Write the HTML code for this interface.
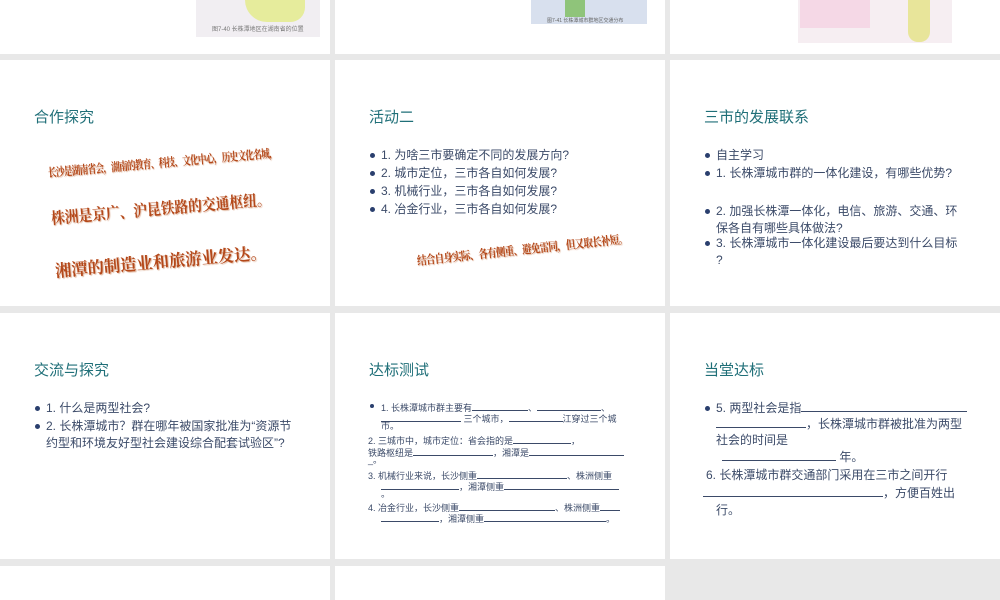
<!DOCTYPE html>
<html><head><meta charset="utf-8"><style>
body{margin:0;width:1000px;height:600px;background:#e8e8e8;position:relative;overflow:hidden;font-family:"Liberation Sans","Noto Sans CJK SC",sans-serif}
.c{position:absolute;background:#fff;overflow:hidden}
.t{position:absolute;color:#1f6f78;font-size:15px;white-space:nowrap}
.l{position:absolute;color:#3b4a68;font-size:12px;white-space:nowrap;line-height:17px}
.s{position:absolute;color:#3b4a68;font-size:9px;white-space:nowrap;line-height:11px}
.b{position:absolute;width:5px;height:5px;border-radius:50%;background:#2a3f6e}
.r{position:absolute;color:#b4481a;font-weight:bold;white-space:nowrap;transform-origin:left center;text-shadow:1px 1px 1px #e0b8a0;font-family:"Noto Serif CJK SC","Noto Sans CJK SC",serif}
u{text-decoration:none;border-bottom:1px solid #3b4a68;display:inline-block;height:11px;vertical-align:baseline}
</style></head><body>
<div class="c" style="left:0;top:0;width:330px;height:54px">
 <div style="position:absolute;left:196px;top:0;width:124px;height:37px;background:#f1eef2"></div>
 <div style="position:absolute;left:245px;top:0;width:60px;height:22px;background:#e6ec9c;border-radius:0 0 20px 30px"></div>
 <div class="s" style="left:212px;top:25px;font-size:6px;color:#777">图7-40 长株潭地区在湖南省的位置</div>
</div>
<div class="c" style="left:335px;top:0;width:330px;height:54px">
 <div style="position:absolute;left:196px;top:0;width:116px;height:24px;background:#d8e0ee"></div>
 <div style="position:absolute;left:230px;top:0;width:20px;height:17px;background:#8fc47a"></div>
 <div class="s" style="left:212px;top:16px;font-size:5px;color:#666">图7-41 长株潭城市群地区交通分布</div>
</div>
<div class="c" style="left:670px;top:0;width:330px;height:54px">
 <div style="position:absolute;left:128px;top:0;width:154px;height:43px;background:#f6eef2"></div>
 <div style="position:absolute;left:130px;top:0;width:70px;height:28px;background:#f5d8e6"></div>
 <div style="position:absolute;left:238px;top:0;width:22px;height:42px;background:#e8e59a;border-radius:0 0 10px 10px"></div>
</div>

<div class="c" style="left:0;top:60px;width:330px;height:246px">
 <div class="t" style="left:34px;top:46px">合作探究</div>
 <div class="r" style="left:48px;top:104px;font-size:12px;letter-spacing:-1px;transform:rotate(-5deg) scaleX(0.72)">长沙是湖南省会，湖南的教育、科技、文化中心，历史文化名城，</div>
 <div class="r" style="left:51px;top:146px;font-size:16px;transform:rotate(-5deg) scaleX(0.86)">株洲是京广、沪昆铁路的交通枢纽。</div>
 <div class="r" style="left:55px;top:197px;font-size:17px;transform:rotate(-5deg) scaleX(0.96)">湘潭的制造业和旅游业发达。</div>
</div>
<div class="c" style="left:335px;top:60px;width:330px;height:246px">
 <div class="t" style="left:34px;top:46px">活动二</div>
 <div class="b" style="left:35px;top:93px"></div><div class="l" style="left:46px;top:87px">1. 为啥三市要确定不同的发展方向?</div>
 <div class="b" style="left:35px;top:111px"></div><div class="l" style="left:46px;top:105px">2. 城市定位，三市各自如何发展?</div>
 <div class="b" style="left:35px;top:129px"></div><div class="l" style="left:46px;top:123px">3.  机械行业，三市各自如何发展?</div>
 <div class="b" style="left:35px;top:147px"></div><div class="l" style="left:46px;top:141px">4. 冶金行业，三市各自如何发展?</div>
 <div class="r" style="left:82px;top:192px;font-size:12px;letter-spacing:-1px;transform:rotate(-6deg) scaleX(0.8)">结合自身实际、各有侧重、避免雷同，但又取长补短。</div>
</div>
<div class="c" style="left:670px;top:60px;width:330px;height:246px">
 <div class="t" style="left:34px;top:46px">三市的发展联系</div>
 <div class="b" style="left:35px;top:93px"></div><div class="l" style="left:46px;top:87px">自主学习</div>
 <div class="b" style="left:35px;top:111px"></div><div class="l" style="left:46px;top:105px">1. 长株潭城市群的一体化建设，有哪些优势?</div>
 <div class="b" style="left:35px;top:149px"></div><div class="l" style="left:46px;top:143px">2. 加强长株潭一体化，电信、旅游、交通、环<br>保各自有哪些具体做法?</div>
 <div class="b" style="left:35px;top:181px"></div><div class="l" style="left:46px;top:175px">3. 长株潭城市一体化建设最后要达到什么目标<br>?</div>
</div>

<div class="c" style="left:0;top:313px;width:330px;height:246px">
 <div class="t" style="left:34px;top:46px">交流与探究</div>
 <div class="b" style="left:35px;top:93px"></div><div class="l" style="left:46px;top:87px">1. 什么是两型社会?</div>
 <div class="b" style="left:35px;top:111px"></div><div class="l" style="left:46px;top:105px">2. 长株潭城市？群在哪年被国家批准为“资源节<br>约型和环境友好型社会建设综合配套试验区”?</div>
</div>
<div class="c" style="left:335px;top:313px;width:330px;height:246px">
 <div class="t" style="left:34px;top:46px">达标测试</div>
 <div class="b" style="left:35px;top:91px;width:4px;height:4px"></div>
 <div class="s" style="left:46px;top:86px">1. 长株潭城市群主要有<u style="width:56px"></u>、<u style="width:64px"></u>、</div>
 <div class="s" style="left:46px;top:97px"><u style="width:80px"></u> 三个城市，<u style="width:54px"></u>江穿过三个城</div>
 <div class="s" style="left:46px;top:108px">市。</div>
 <div class="s" style="left:33px;top:119px">2. 三城市中，城市定位：省会指的是<u style="width:58px"></u>，</div>
 <div class="s" style="left:33px;top:131px">铁路枢纽是<u style="width:80px"></u>，湘潭是<u style="width:95px"></u></div>
 <div class="s" style="left:33px;top:142px">_。</div>
 <div class="s" style="left:33px;top:154px">3. 机械行业来说，长沙侧重<u style="width:90px"></u>、株洲侧重</div>
 <div class="s" style="left:46px;top:165px"><u style="width:78px"></u>，湘潭侧重<u style="width:115px"></u></div>
 <div class="s" style="left:46px;top:176px">。</div>
 <div class="s" style="left:33px;top:186px">4. 冶金行业，长沙侧重<u style="width:96px"></u>、株洲侧重<u style="width:20px"></u></div>
 <div class="s" style="left:46px;top:197px"><u style="width:58px"></u>，湘潭侧重<u style="width:122px"></u>。</div>
</div>
<div class="c" style="left:670px;top:313px;width:330px;height:246px">
 <div class="t" style="left:34px;top:46px">当堂达标</div>
 <div class="b" style="left:35px;top:93px"></div><div class="l" style="left:46px;top:87px">5. 两型社会是指<u style="width:166px"></u></div>
 <div class="l" style="left:46px;top:103px"><u style="width:90px"></u>，长株潭城市群被批准为两型</div>
 <div class="l" style="left:46px;top:119px">社会的时间是</div>
 <div class="l" style="left:52px;top:136px"><u style="width:114px"></u> 年。</div>
 <div class="l" style="left:36px;top:154px">6. 长株潭城市群交通部门采用在三市之间开行</div>
 <div class="l" style="left:33px;top:172px"><u style="width:180px"></u>，方便百姓出</div>
 <div class="l" style="left:46px;top:189px">行。</div>
</div>

<div class="c" style="left:0;top:566px;width:330px;height:34px"></div>
<div class="c" style="left:335px;top:566px;width:330px;height:34px"></div>
</body></html>
